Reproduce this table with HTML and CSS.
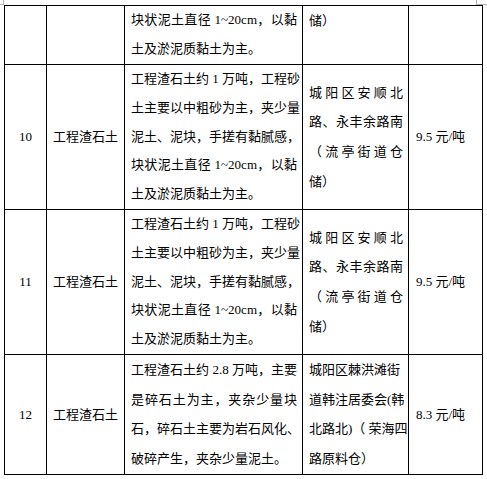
FILE: index.html
```html
<!DOCTYPE html>
<html lang="zh">
<head>
<meta charset="utf-8">
<link rel="stylesheet" href="styles.css">
</head>
<body>
<div class="mark mark-left"></div>
<div class="mark mark-right"></div>
<table class="grid">
  <colgroup>
    <col class="c-no"><col class="c-type"><col class="c-desc"><col class="c-loc"><col class="c-price">
  </colgroup>
  <tr class="r-first">
    <td></td>
    <td></td>
    <td class="desc"><span class="j">块状泥土直径 1~20cm，以黏</span><span>土及淤泥质黏土为主。</span></td>
    <td class="loc top"><span>储）</span></td>
    <td></td>
  </tr>
  <tr class="r-10">
    <td class="no">10</td>
    <td class="type">工程渣石土</td>
    <td class="desc"><span class="j">工程渣石土约 1 万吨，工程砂</span><span class="j">土主要以中粗砂为主，夹少量</span><span class="j">泥土、泥块，手搓有黏腻感，</span><span class="j">块状泥土直径 1~20cm，以黏</span><span>土及淤泥质黏土为主。</span></td>
    <td class="loc"><span class="j">城阳区安顺北</span><span class="j">路、永丰余路南</span><span class="j">（流亭街道仓</span><span>储）</span></td>
    <td class="price">9.5 元/吨</td>
  </tr>
  <tr class="r-11">
    <td class="no">11</td>
    <td class="type">工程渣石土</td>
    <td class="desc"><span class="j">工程渣石土约 1 万吨，工程砂</span><span class="j">土主要以中粗砂为主，夹少量</span><span class="j">泥土、泥块，手搓有黏腻感，</span><span class="j">块状泥土直径 1~20cm，以黏</span><span>土及淤泥质黏土为主。</span></td>
    <td class="loc"><span class="j">城阳区安顺北</span><span class="j">路、永丰余路南</span><span class="j">（流亭街道仓</span><span>储）</span></td>
    <td class="price">9.5 元/吨</td>
  </tr>
  <tr class="r-12">
    <td class="no">12</td>
    <td class="type">工程渣石土</td>
    <td class="desc"><span class="j">工程渣石土约 2.8 万吨，主要</span><span class="j">是碎石土为主，夹杂少量块</span><span class="j">石，碎石土主要为岩石风化、</span><span>破碎产生，夹杂少量泥土。</span></td>
    <td class="loc"><span>城阳区棘洪滩街</span><span>道韩注居委会(韩</span><span>北路北)（ 荣海四</span><span>路原料仓）</span></td>
    <td class="price">8.3 元/吨</td>
  </tr>
</table>
</body>
</html>
```
FILE: styles.css
```css
html, body {
  margin: 0;
  padding: 0;
  background: #fff;
}
body {
  position: relative;
  width: 487px;
  height: 479px;
  overflow: hidden;
  font-family: "Liberation Serif", "Noto Sans CJK SC", serif;
  font-size: 13px;
  color: #000;
}
.mark {
  position: absolute;
  top: 0;
  width: 5px;
  height: 5px;
}
.mark-left {
  left: 0;
  border-right: 1px solid #b0b0b0;
  border-bottom: 1px solid #b0b0b0;
  width: 3px;
  height: 4px;
}
.mark-right {
  left: 476px;
  border-left: 1px solid #b0b0b0;
  border-bottom: 1px solid #b0b0b0;
  width: 10px;
  height: 4px;
}
.grid {
  margin: 5px 0 0 4px;
  border-collapse: collapse;
  table-layout: fixed;
  width: 478px;
  position: relative;
}
.c-no { width: 42px; }
.c-type { width: 78px; }
.c-desc { width: 178px; }
.c-loc { width: 106px; }
.c-price { width: 74px; }
.grid td {
  border: 1px solid #000;
  padding: 0 5px 0 6px;
  vertical-align: middle;
  line-height: 28.8px;
  overflow: hidden;
}
.r-first { height: 59px; }
.r-10 { height: 144px; }
.r-11 { height: 145px; }
.r-12 { height: 120px; }
.r-12 td { line-height: 29.5px; }
.grid td span {
  display: block;
  white-space: nowrap;
}
.grid td span.j {
  text-align: justify;
  text-align-last: justify;
}
.grid td.loc {
  line-height: 29.6px;
}
.r-12 td.loc { line-height: 29.5px; }
.grid td.top {
  vertical-align: top;
  padding-top: 0;
}
.no, .type {
  text-align: center;
}
.grid td.no { padding: 0; }
.grid td.type { padding: 0; }
.grid td.price { padding-left: 7px; }
```
